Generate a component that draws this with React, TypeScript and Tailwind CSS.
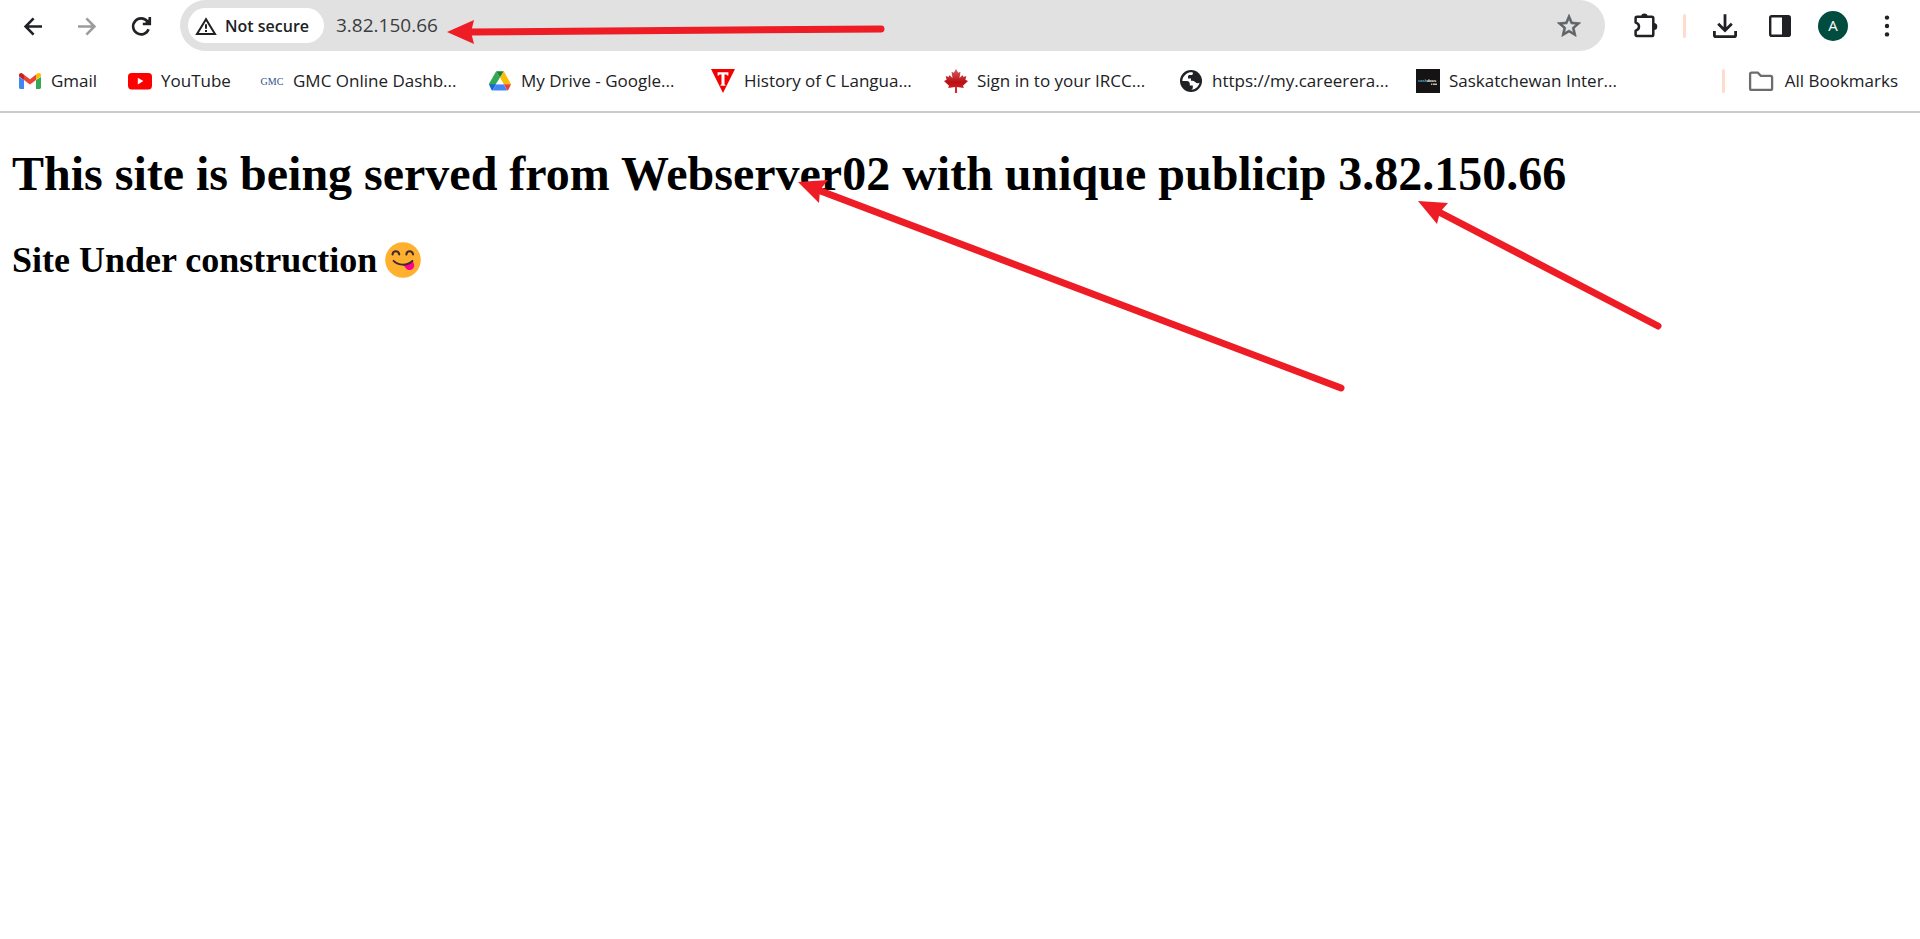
import React from "react";

const stroke = {
  fill: "none",
  stroke: "currentColor",
  strokeWidth: 2.6,
} as const;

function BackIcon() {
  return (
    <svg viewBox="0 0 24 24" className="size-6" {...stroke} aria-hidden="true">
      <path d="M21 12.5H5M12.6 4.3 4.6 12.5l8 8.2" />
    </svg>
  );
}

function ForwardIcon() {
  return (
    <svg viewBox="0 0 24 24" className="size-6" {...stroke} aria-hidden="true">
      <path d="M3 12.5h16M11.4 4.3l8 8.2-8 8.2" />
    </svg>
  );
}

function ReloadIcon() {
  return (
    <svg viewBox="0 0 24 24" className="size-6" {...stroke} aria-hidden="true">
      <path d="M19.6 15.2A8 8 0 1 1 18.4 7.4L20 9.3" />
      <path d="M20.8 3v7h-7" strokeWidth="2.6" />
      <path d="M20.6 4.5v5.3h-5.3z" fill="currentColor" stroke="none" />
    </svg>
  );
}

function WarningIcon() {
  return (
    <svg viewBox="0 0 22 20" className="h-5 w-[22px]" aria-hidden="true">
      <path d="M11 3.2 2 18h18z" fill="none" stroke="#202124" strokeWidth="2" />
      <path d="M11 8.2v4.6M11 14v2" stroke="#202124" strokeWidth="2" />
    </svg>
  );
}

function StarIcon() {
  return (
    <svg viewBox="0 0 24 24" className="size-7" fill="#5f6368" stroke="#5f6368" strokeWidth="0.6" aria-hidden="true">
      <path d="m22 9.24-7.19-.62L12 2 9.19 8.63 2 9.24l5.46 4.73L5.82 21 12 17.27 18.18 21l-1.63-7.03L22 9.24zM12 15.4l-3.76 2.27 1-4.28-3.32-2.88 4.38-.38L12 6.1l1.71 4.04 4.38.38-3.32 2.88 1 4.28L12 15.4z" />
    </svg>
  );
}

function PuzzleIcon() {
  return (
    <svg viewBox="0 0 26 26" className="size-[26px]" aria-hidden="true">
      <path
        d="M4.5 3.8h14.2a1.600 1.600 0 0 1 1.600 1.600v16a1.600 1.600 0 0 1-1.600 1.600H4a1.400 1.400 0 0 1-1.400-1.400v-4c2.600-.6 3.400-2.200 3.400-4s-.8-3.400-3.400-4V5.200A1.400 1.400 0 0 1 4 3.800z"
        fill="none"
        stroke="#202124"
        strokeWidth="2.500"
        strokeLinejoin="round"
      />
      <path d="M8.200 3.600a3.200 3.200 0 0 1 6.400 0zM20.800 10a3.500 3.500 0 0 1 0 7z" fill="#202124" />
    </svg>
  );
}

function DownloadIcon() {
  return (
    <svg viewBox="0 0 26 26" className="size-[26px]" fill="none" stroke="#202124" strokeWidth="2.8" aria-hidden="true">
      <path d="M13 1.2v16M6.2 10.8l6.8 6.8 6.8-6.8" />
      <path d="M2.4 18v4.2a1.4 1.4 0 0 0 1.4 1.4h18.4a1.4 1.4 0 0 0 1.4-1.4V18" />
    </svg>
  );
}

function PanelIcon() {
  return (
    <svg viewBox="0 0 24 24" className="size-6" aria-hidden="true">
      <rect x="2.2" y="2.2" width="19.6" height="19.6" rx="1.6" fill="none" stroke="#202124" strokeWidth="2.4" />
      <path d="M14 2h7.5v20H14z" fill="#202124" />
    </svg>
  );
}

function DotsIcon() {
  return (
    <svg viewBox="0 0 24 24" className="size-6" fill="#202124" aria-hidden="true">
      <circle cx="12" cy="3.6" r="2.2" />
      <circle cx="12" cy="12" r="2.2" />
      <circle cx="12" cy="20.4" r="2.2" />
    </svg>
  );
}

function GmailIcon() {
  return (
    <svg viewBox="0 0 24 24" className="size-6" aria-hidden="true">
      <path d="M1 8v10.6c0 .9.6 1.4 1.4 1.4H6v-9z" fill="#4285f4" />
      <path d="M23 8v10.6c0 .9-.6 1.4-1.4 1.4H18v-9z" fill="#34a853" />
      <path d="M18 5.6V11l5-3.7V6.2c0-2.2-2.2-3-3.8-1.6z" fill="#fbbc04" />
      <path d="M6 5.8V11l6 4.6 6-4.6V5.6l-6 4.6z" fill="#ea4335" />
      <path d="M1 6.2v1.2L6 11V5.7L4.8 4.7C3.2 3.4 1 4.1 1 6.2z" fill="#c5221f" />
    </svg>
  );
}

function YouTubeIcon() {
  return (
    <svg viewBox="0 0 24 24" className="size-6" aria-hidden="true">
      <rect y="4" width="24" height="16.4" rx="3.6" fill="#f00" />
      <path d="M9.8 8.8v6.6l5.6-3.3z" fill="#fff" />
    </svg>
  );
}

function GmcIcon() {
  return (
    <span aria-hidden="true" className="flex size-6 items-center justify-center font-['Liberation_Serif',serif] text-[10px] font-normal text-[#2f4f8c]">
      GMC
    </span>
  );
}

function DriveIcon() {
  return (
    <svg viewBox="0 0 24 24" className="size-6" aria-hidden="true">
      <path d="M8.2 2.2h7.6L12 8.8z" fill="#188038" />
      <path d="M8.2 2.2 1 14.8l3.2 6L12 8.8z" fill="#34a853" />
      <path d="M1 15.2h7.2l-3.6 6.3c-.6-.2-1-.6-1.3-1.1z" fill="#1967d2" />
      <path d="M15.8 2.2 23 15.2h-7.3L12 8.8z" fill="#fbbc04" />
      <path d="M15.7 15.2H23l-2.3 5c-.3.5-.8.9-1.3 1.2z" fill="#ea4335" />
      <path d="M8.2 15.2h7.5l3.6 6.3H4.7z" fill="#4285f4" />
      <path d="m12 8.8 3.7 6.4H8.2z" fill="#fff" />
    </svg>
  );
}

function TIcon() {
  return (
    <svg viewBox="0 0 24 24" className="size-6" aria-hidden="true">
      <path d="M0 0h24L12 24z" fill="#f40000" />
      <path d="M6.6 3.2h10.8v3.4h-1.3l-.6-1.2h-2v9.8l1 .8v.8H9.5V16l1-.8V5.4h-2l-.6 1.2H6.6z" fill="#fff" />
    </svg>
  );
}

function MapleIcon() {
  return (
    <svg viewBox="0 0 24 24" className="size-6" aria-hidden="true">
      <defs>
        <linearGradient id="maple" x1="0" y1="0" x2="0" y2="1">
          <stop offset="0" stopColor="#d96060" />
          <stop offset="0.55" stopColor="#b90f12" />
          <stop offset="1" stopColor="#d83030" />
        </linearGradient>
      </defs>
      <path
        d="m12 0 2.2 3.8 2.3-1.1-1 6.2 3-3 .6 1.8 3.3-.4-1 3.4 2.6 1.3-5 4.7.8 2.2-6.9-.8.2 5.9h-2.2l.2-5.9-6.9.8.8-2.2L0 12l2.600-1.300-1-3.400 3.300.4.6-1.800 3 3-1-6.200 2.300 1.100z"
        fill="url(#maple)"
      />
    </svg>
  );
}

function GlobeIcon() {
  return (
    <svg viewBox="0 0 24 24" className="size-6" aria-hidden="true">
      <circle cx="12" cy="12" r="11" fill="#202124" />
      <path
        d="M13.8 3.4c-2.3-.7-4.800 0-6.600 1.500C5 6.700 3.200 9 3.300 12h4.400c1.900 0 3.100 1.200 3.100 2.900v1.500h3v2.400c0 1-.8 1.700-2 1.900 4.200.2 7.800-2.800 8.700-6.900-1.400.8-3.200.6-4.300-.7-.9-1.100-2-1.400-4.200-1.400V9.600h-3V7.700c0-1 .7-1.700 1.700-1.700h2c1 0 1.400-1.600 1.100-2.600z"
        fill="#fff"
      />
    </svg>
  );
}

function SaskIcon() {
  return (
    <svg viewBox="0 0 24 24" className="size-6" aria-hidden="true">
      <path d="M0 0h24v24H0z" fill="#151313" />
      <text x="2" y="13" fontSize="4" fontWeight="700" fontFamily="Liberation Sans, sans-serif" fill="#5fb0cf">
        sask<tspan fill="#fff">docs</tspan>
      </text>
      <path d="M15 14.400h1.400v1.600H15zM17 14.400h4v1.600h-4z" fill="#bbb" />
    </svg>
  );
}

function FolderIcon() {
  return (
    <svg viewBox="0 0 26 24" className="h-6 w-[26px]" aria-hidden="true">
      <path
        d="M3.600 3.700h6.200l3 3.200h9.800a1.500 1.500 0 0 1 1.500 1.500v11a1.500 1.500 0 0 1-1.500 1.500H3.600a1.500 1.500 0 0 1-1.500-1.500V5.200a1.500 1.500 0 0 1 1.500-1.500z"
        fill="none"
        stroke="#6b6d70"
        strokeWidth="2.300"
      />
    </svg>
  );
}

function TongueFace() {
  return (
    <svg viewBox="0 0 36 36" className="size-9" role="img" aria-label="Face savoring food">
      <circle cx="18" cy="18" r="17.800" fill="#ffb02e" />
      <path d="M18.500 22.800c3.500-.2 6.500-1.800 8.800-3.800 2.200 2.800 2.600 5.200 1 7.200-1.700 2.200-5 2.400-7 .5-1.200-1.100-2-2.400-2.800-3.900z" fill="#ff0091" />
      <g fill="none" stroke="#402a32" strokeWidth="2" strokeLinecap="round">
        <path d="M7.500 12.500c.6-4.300 6-4.300 6.800 0M21.300 12.500c.6-4.300 6-4.300 6.800 0" />
        <path d="M8.600 18.900c4.800 4.900 13.600 5 18.800.1" />
      </g>
    </svg>
  );
}

function Arrow({ head, from, to }: { head: string; from: [number, number]; to: [number, number] }) {
  return (
    <g>
      <line x1={from[0]} y1={from[1]} x2={to[0]} y2={to[1]} stroke="#ee1c24" strokeWidth="7" strokeLinecap="round" />
      <polygon points={head} fill="#ee1c24" />
    </g>
  );
}

const bookmarks = [
  { label: "Gmail", icon: <GmailIcon />, width: "w-[110px]" },
  { label: "YouTube", icon: <YouTubeIcon />, width: "w-[132px]" },
  { label: "GMC Online Dashb...", icon: <GmcIcon />, width: "w-[228px]" },
  { label: "My Drive - Google...", icon: <DriveIcon />, width: "w-[223px]" },
  { label: "History of C Langua...", icon: <TIcon />, width: "w-[233px]" },
  { label: "Sign in to your IRCC...", icon: <MapleIcon />, width: "w-[235px]" },
  { label: "https://my.careerera...", icon: <GlobeIcon />, width: "w-[237px]" },
  { label: "Saskatchewan Inter...", icon: <SaskIcon />, width: "w-[233px]" },
];

export default function App() {
  return (
    <div className="relative min-h-screen bg-white">
      <header className="border-b-2 border-[#cbcbcb] font-['Open_Sans',sans-serif] text-[#202124]">
        <div className="flex h-[51px] items-center">
          <nav aria-label="History" className="flex w-[180px] shrink-0 items-center gap-[30px] pl-[21px]">
            <button aria-label="Back"><BackIcon /></button>
            <button aria-label="Forward" className="text-[#9c9c9c]"><ForwardIcon /></button>
            <button aria-label="Reload"><ReloadIcon /></button>
          </nav>
          <div className="flex h-full flex-1 items-center rounded-full bg-[#e1e1e1] pr-[22px] pl-2">
            <button className="flex h-[35px] w-[136px] shrink-0 items-center gap-2 rounded-full bg-white pl-[7px] text-[16px] font-semibold whitespace-nowrap">
              <WarningIcon />
              Not secure
            </button>
            <input
              aria-label="Address"
              defaultValue="3.82.150.66"
              className="min-w-0 flex-1 bg-transparent pl-3 text-[19px] text-[#3c3d40] outline-none"
            />
            <button aria-label="Bookmark this page"><StarIcon /></button>
          </div>
          <div className="flex shrink-0 items-center pr-[21px] pl-7">
            <button aria-label="Extensions"><PuzzleIcon /></button>
            <span className="ml-6 h-6 w-[3px] rounded-full bg-[#fddccb]" />
            <button aria-label="Downloads" className="ml-[26px]"><DownloadIcon /></button>
            <button aria-label="Side panel" className="ml-[30px]"><PanelIcon /></button>
            <button aria-label="Profile" className="ml-[26px] flex size-[30px] items-center justify-center rounded-full bg-[#004d40] text-[15px] text-white">
              A
            </button>
            <button aria-label="Menu" className="ml-[27px]"><DotsIcon /></button>
          </div>
        </div>
        <div className="flex h-[60px] items-center pr-[22px] pl-[18px] text-[17px]">
          <ul className="flex flex-1 items-center">
            {bookmarks.map((b) => (
              <li key={b.label} className={b.width}>
                <a href="#" className="flex items-center gap-[9px] whitespace-nowrap">
                  <span className="shrink-0">{b.icon}</span>
                  {b.label}
                </a>
              </li>
            ))}
          </ul>
          <span className="h-6 w-[3px] rounded-full bg-[#fddccb]" />
          <button className="ml-[23px] flex items-center gap-[11px] whitespace-nowrap">
            <FolderIcon />
            All Bookmarks
          </button>
        </div>
      </header>
      <main className="px-3 pt-8 font-['Liberation_Serif',serif] font-bold text-black">
        <h1 className="text-[48px] leading-[58px]">
          This site is being served from Webserver02 with unique publicip 3.82.150.66
        </h1>
        <h2 className="mt-9 flex items-center gap-2 text-[36px] leading-[42px]">
          Site Under construction
          <TongueFace />
        </h2>
      </main>
      <svg
        viewBox="0 0 1920 939"
        className="pointer-events-none absolute top-0 left-0 h-[939px] w-[1920px] max-w-none"
        aria-hidden="true"
      >
        <Arrow head="447,32 474,20 471,32 474,44" from={[469, 32]} to={[881, 29]} />
        <Arrow head="798,182 828,180 820,190 819,203" from={[818, 190]} to={[1341, 388]} />
        <Arrow head="1418,201 1448,203 1440,212 1437,224" from={[1437, 211]} to={[1658, 326]} />
      </svg>
    </div>
  );
}
